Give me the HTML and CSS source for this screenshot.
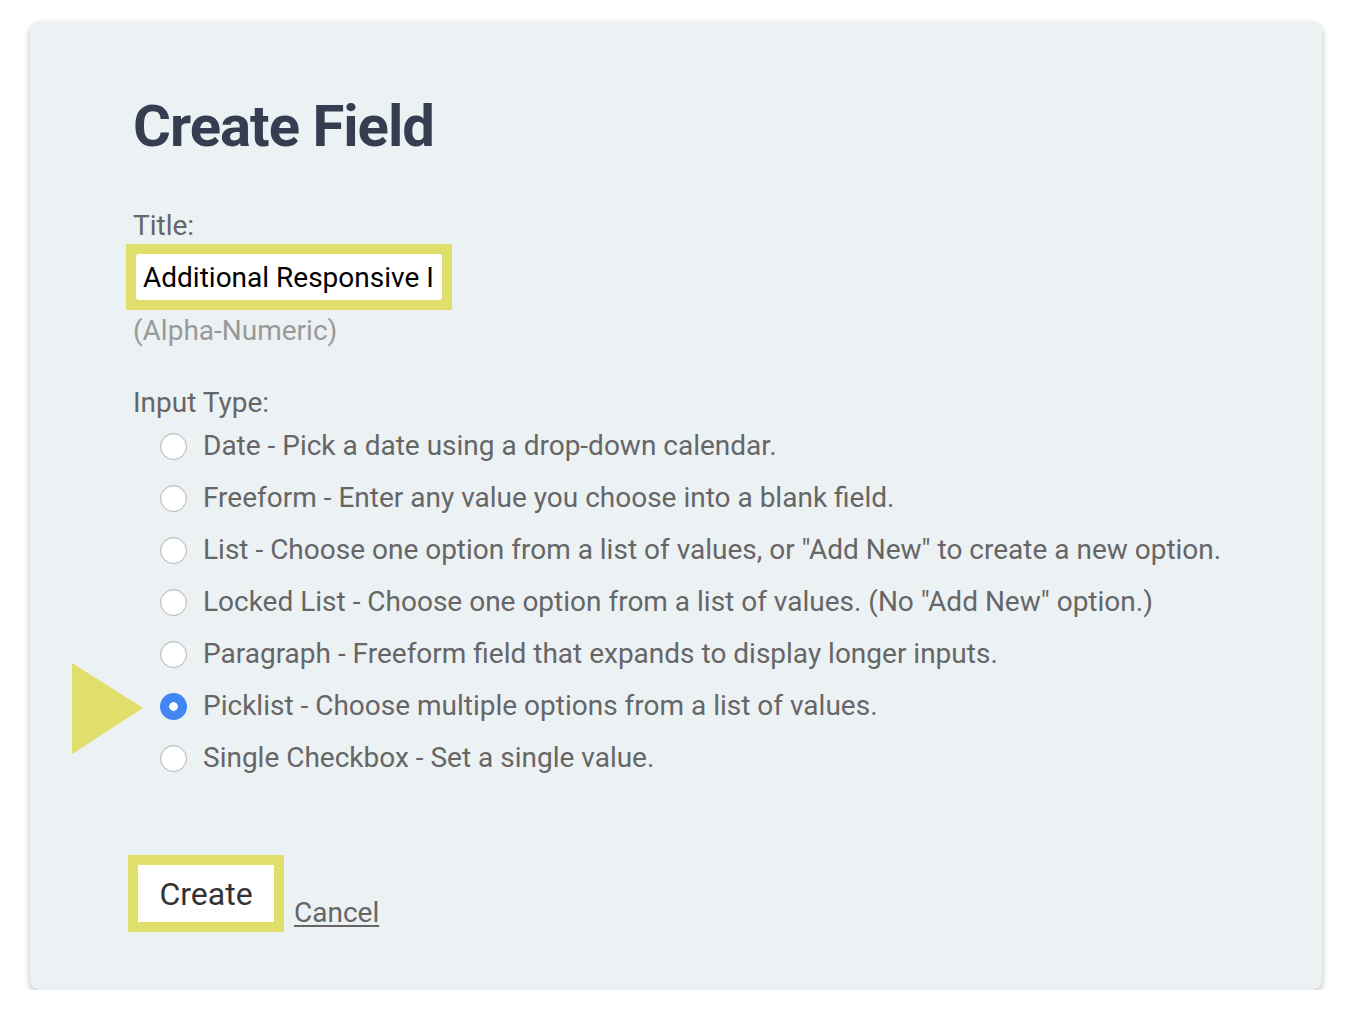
FILE: index.html
```html
<!DOCTYPE html>
<html lang="en">
<head>
  <meta charset="UTF-8">
  <title>Create Field</title>
  <link rel="stylesheet" href="styles.css">
</head>
<body>
  <div class="card">
    <h1 class="heading">Create Field</h1>

    <div class="label">Title:</div>
    <div class="mark">
      <input class="text-input" type="text" value="Additional Responsive Images">
    </div>
    <div class="hint">(Alpha-Numeric)</div>

    <div class="label label-type">Input Type:</div>
    <ul class="options">
      <li class="option"><input class="radio" type="radio" name="type"><span>Date - Pick a date using a drop-down calendar.</span></li>
      <li class="option"><input class="radio" type="radio" name="type"><span>Freeform - Enter any value you choose into a blank field.</span></li>
      <li class="option"><input class="radio" type="radio" name="type"><span>List - Choose one option from a list of values, or "Add New" to create a new option.</span></li>
      <li class="option"><input class="radio" type="radio" name="type"><span>Locked List - Choose one option from a list of values. (No "Add New" option.)</span></li>
      <li class="option"><input class="radio" type="radio" name="type"><span>Paragraph - Freeform field that expands to display longer inputs.</span></li>
      <li class="option option-active">
        <span class="pointer"></span>
        <input class="radio" type="radio" name="type" checked><span>Picklist - Choose multiple options from a list of values.</span>
      </li>
      <li class="option"><input class="radio" type="radio" name="type"><span>Single Checkbox - Set a single value.</span></li>
    </ul>

    <div class="actions">
      <div class="mark">
        <button class="btn" type="button">Create</button>
      </div>
      <a class="cancel" href="#">Cancel</a>
    </div>
  </div>
</body>
</html>
```

FILE: styles.css
```css
body {
  margin: 0;
  padding: 0;
  background-color: #ffffff;
  font-family: Roboto, "Liberation Sans", sans-serif;
}
.card {
  box-sizing: border-box;
  width: 1292px;
  height: 968px;
  margin: 22px 0 0 30px;
  padding: 69px 0 0 103px;
  background-color: #ecf1f4;
  border-radius: 10px;
  box-shadow: 0 2px 6px rgba(0, 0, 0, 0.28);
}
.heading {
  margin: 0 0 49px 0;
  font-size: 58px;
  line-height: 70px;
  font-weight: 700;
  letter-spacing: -1px;
  color: #343e50;
}
.label {
  font-size: 28px;
  line-height: 32px;
  color: #666666;
  margin-bottom: 2px;
}
.label-type {
  margin-bottom: 0;
}
.mark {
  display: inline-block;
  margin-left: -7px;
  padding: 10px;
  background-color: #e1df6b;
}
.text-input {
  display: block;
  box-sizing: border-box;
  width: 306px;
  height: 46px;
  margin: 0;
  padding: 0 7px;
  border: none;
  border-radius: 3px;
  background-color: #ffffff;
  font-family: Roboto, "Liberation Sans", sans-serif;
  font-size: 28px;
  color: #000000;
  outline: none;
}
.hint {
  margin: 5px 0 40px 0;
  font-size: 28px;
  line-height: 32px;
  color: #999999;
}
.options {
  list-style: none;
  margin: 0;
  padding: 0 0 0 27px;
}
.option {
  position: relative;
  display: flex;
  align-items: center;
  gap: 16px;
  height: 52px;
  font-size: 28px;
  color: #666666;
}
.radio {
  appearance: none;
  -webkit-appearance: none;
  box-sizing: border-box;
  width: 27px;
  height: 27px;
  margin: 2px 0 0 0;
  border: 1.5px solid #b4b4b4;
  border-radius: 50%;
  background-color: #ffffff;
  box-shadow: inset 0 1px 2px rgba(0, 0, 0, 0.08);
}
.radio:checked {
  border: none;
  background-color: #4286f4;
  background-image: radial-gradient(circle, #ffffff 0, #ffffff 4px, transparent 4.6px);
  box-shadow: none;
}
.pointer {
  position: absolute;
  left: -88px;
  top: -16px;
  width: 0;
  height: 0;
  border-left: 71px solid #e1df6b;
  border-top: 45px solid transparent;
  border-bottom: 46px solid transparent;
}
.actions {
  display: flex;
  align-items: flex-end;
  gap: 10px;
  margin-top: 72px;
}
.actions .mark {
  margin-left: -5px;
}
.btn {
  display: block;
  width: 136px;
  height: 57px;
  margin: 0;
  padding: 0;
  border: none;
  background-color: #ffffff;
  font-family: Roboto, "Liberation Sans", sans-serif;
  font-size: 32px;
  color: #333333;
}
.cancel {
  margin-bottom: 3px;
  font-size: 28px;
  line-height: 32px;
  color: #666666;
  text-decoration: underline;
  text-underline-offset: 3px;
}
```
